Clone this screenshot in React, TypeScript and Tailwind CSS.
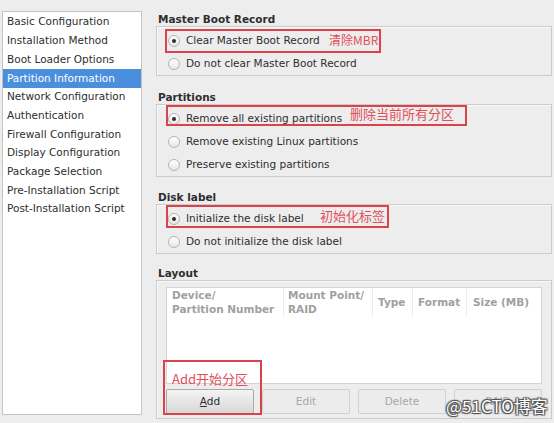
import React from "react";

const navItems = [
  "Basic Configuration",
  "Installation Method",
  "Boot Loader Options",
  "Partition Information",
  "Network Configuration",
  "Authentication",
  "Firewall Configuration",
  "Display Configuration",
  "Package Selection",
  "Pre-Installation Script",
  "Post-Installation Script",
];

const cjk = "'Noto Sans CJK SC', 'DejaVu Sans', sans-serif";

function Radio({ checked }: { checked?: boolean }) {
  return (
    <span className="w-[12px] h-[12px] rounded-full border border-[#b4b4b4] bg-linear-to-b from-white to-[#e6e6e6] flex items-center justify-center shrink-0">
      {checked && <span className="w-[4px] h-[4px] rounded-full bg-[#2e2e2e]" />}
    </span>
  );
}

interface Note {
  left: number;
  top: number;
  width: number;
  height: number;
  text: string;
  textLeft: number;
  textTop: number;
  size?: number;
}

function Option({ label, checked, note }: { label: string; checked?: boolean; note?: Note }) {
  return (
    <div className="relative flex items-center h-[23px] pl-[11px] gap-[6px]">
      <Radio checked={checked} />
      <span>{label}</span>
      {note && (
        <>
          <div
            className="absolute border-2 border-[#d9434c]"
            style={{ left: note.left, top: note.top, width: note.width, height: note.height }}
          />
          <span
            className="absolute leading-[16px] text-[#e0505a]"
            style={{ left: note.textLeft, top: note.textTop, fontFamily: cjk, fontSize: note.size ?? 13 }}
          >
            {note.text}
          </span>
        </>
      )}
    </div>
  );
}

function Group({ title, className, children }: { title: string; className?: string; children: React.ReactNode }) {
  return (
    <div className={className}>
      <div className="h-[13px] leading-[13px] font-bold pl-[2px] text-[#2e2e2e]">{title}</div>
      <div className="border border-[#cbcbcb] shadow-[inset_1px_1px_0_#fafafa] pt-[2px]">{children}</div>
    </div>
  );
}

function Btn({ label, enabled }: { label: React.ReactNode; enabled?: boolean }) {
  return (
    <div
      className={
        enabled
          ? "h-[25px] rounded-[2px] border border-[#a9a9a9] bg-linear-to-b from-[#f4f4f4] to-[#d8d8d8] flex items-center justify-center text-[#2e2e2e]"
          : "h-[25px] rounded-[2px] border border-[#d0d0d0] bg-[#ececec] flex items-center justify-center text-[#a8a8a8]"
      }
    >
      {label}
    </div>
  );
}

export default function App() {
  return (
    <div
      className="relative w-[554px] h-[423px] bg-[#ededed] text-[10.5px] text-[#2e2e2e] overflow-hidden"
      style={{ fontFamily: "'DejaVu Sans', sans-serif" }}
    >
      <div className="flex gap-[14px] pl-[2px] pt-[11px]">
        {/* left navigation */}
        <div className="w-[140px] h-[404px] bg-white border border-[#c4c4c4] py-[1px]">
          {navItems.map((item, i) => (
            <div
              key={item}
              className={
                i === 3
                  ? "h-[18.7px] flex items-center pl-[4px] bg-[#4a8fdb] text-white"
                  : "h-[18.7px] flex items-center pl-[4px]"
              }
            >
              {item}
            </div>
          ))}
        </div>

        {/* right panel */}
        <div className="w-[396px] pt-[2px]">
          <Group title="Master Boot Record">
            <Option
              label="Clear Master Boot Record"
              checked
              note={{ left: 8, top: 0, width: 216, height: 24, text: "清除MBR", textLeft: 172, textTop: 3, size: 12 }}
            />
            <Option label="Do not clear Master Boot Record" />
          </Group>

          <Group title="Partitions" className="mt-[15px]">
            <Option
              label="Remove all existing partitions"
              checked
              note={{ left: 9, top: -2, width: 301, height: 21, text: "删除当前所有分区", textLeft: 193, textTop: -1 }}
            />
            <Option label="Remove existing Linux partitions" />
            <Option label="Preserve existing partitions" />
          </Group>

          <Group title="Disk label" className="mt-[14px]">
            <Option
              label="Initialize the disk label"
              checked
              note={{ left: 9, top: -2, width: 223, height: 23, text: "初始化标签", textLeft: 163, textTop: 1 }}
            />
            <Option label="Do not initialize the disk label" />
          </Group>

          <Group title="Layout" className="mt-[13px]">
            <div className="px-[9px] pt-[4px] pb-[4px]">
              <div className="h-[97px] bg-white border border-[#d4d4d4]">
                <div className="grid grid-cols-[117px_89px_40px_54px_1fr] h-[26px] font-bold text-[#a0a0a0] leading-[14px]">
                  <div className="pl-[5px] flex items-center border-r border-[#ececec]">
                    Device/
                    <br />
                    Partition Number
                  </div>
                  <div className="pl-[4px] flex items-center border-r border-[#ececec]">
                    Mount Point/
                    <br />
                    RAID
                  </div>
                  <div className="pl-[5px] flex items-center border-r border-[#ececec]">Type</div>
                  <div className="pl-[5px] flex items-center border-r border-[#ececec]">Format</div>
                  <div className="pl-[6px] flex items-center">Size (MB)</div>
                </div>
              </div>
              <div className="grid grid-cols-4 gap-[8px] mt-[5px]">
                <Btn
                  enabled
                  label={
                    <span>
                      <span className="underline">A</span>dd
                    </span>
                  }
                />
                <Btn label="Edit" />
                <Btn label="Delete" />
                <Btn label="RAID" />
              </div>
            </div>
          </Group>
        </div>
      </div>

      {/* annotation around Add */}
      <div className="absolute left-[163px] top-[360px] w-[99px] h-[55px] border-2 border-[#d9434c]" />
      <span
        className="absolute left-[172px] top-[371px] text-[13px] leading-[16px] text-[#e0505a]"
        style={{ fontFamily: cjk }}
      >
        Add开始分区
      </span>

      {/* watermark */}
      <span
        className="absolute left-[446px] top-[395px] text-[17px] leading-[22px] text-white [text-shadow:0_0_1px_#333,1px_1px_1px_#555,-1px_-1px_1px_#555,1px_-1px_1px_#555,-1px_1px_1px_#555]"
        style={{ fontFamily: cjk }}
      >
        @51CTO博客
      </span>
    </div>
  );
}
